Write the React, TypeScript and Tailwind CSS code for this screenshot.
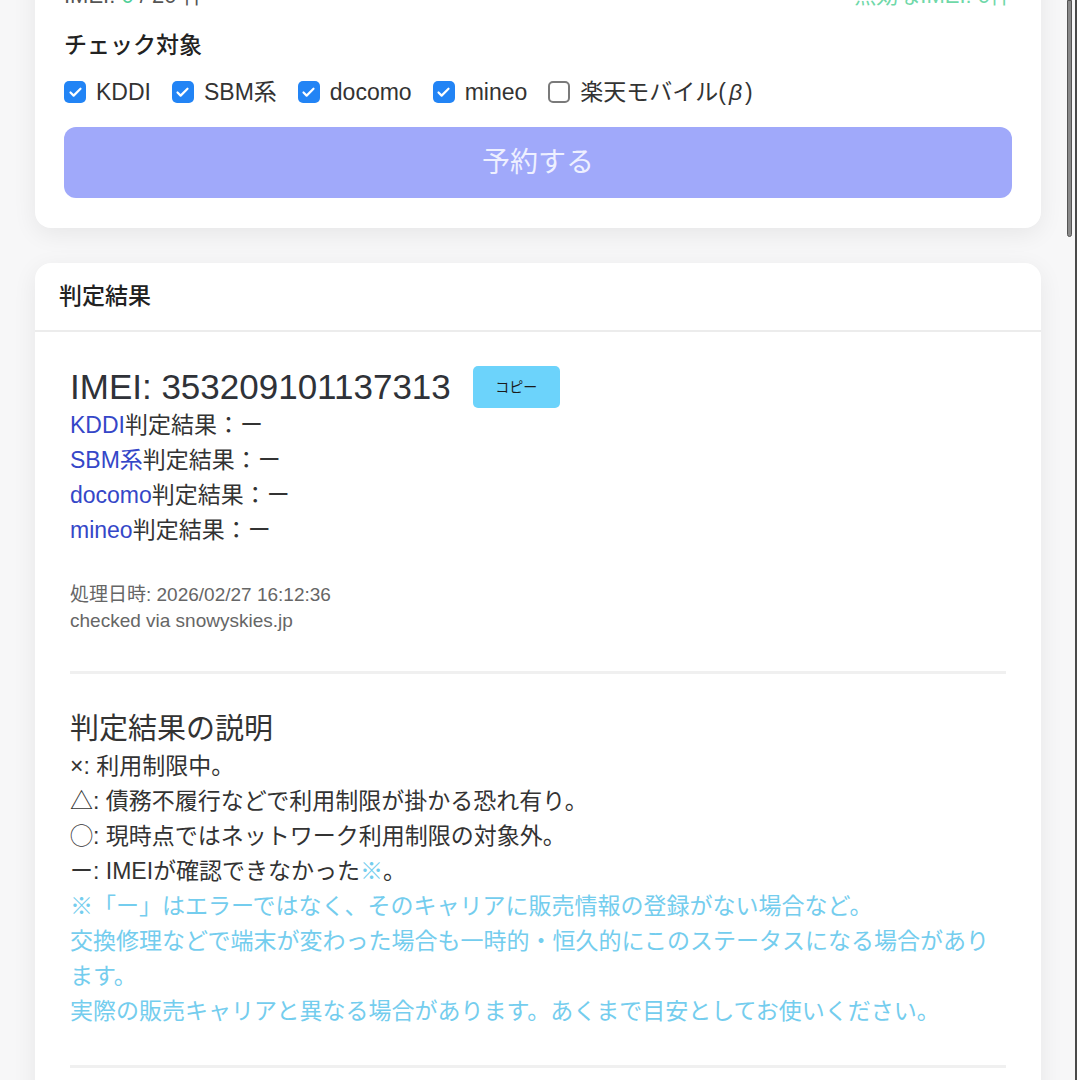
import { Check } from 'lucide-react'

const FONT = { fontFamily: '"Liberation Sans", "Noto Sans CJK JP", sans-serif' }

const CARRIERS = [
  { label: 'KDDI', checked: true },
  { label: 'SBM系', checked: true },
  { label: 'docomo', checked: true },
  { label: 'mineo', checked: true },
  { label: '楽天モバイル', checked: false, beta: true },
]

const RESULTS = ['KDDI', 'SBM系', 'docomo', 'mineo']

function CheckBox({ checked }: { checked: boolean }) {
  if (checked) {
    return (
      <span className="flex h-[22px] w-[22px] items-center justify-center rounded-[5px] bg-[#2284f5]">
        <Check className="h-[15px] w-[15px] text-white" strokeWidth={3.5} />
      </span>
    )
  }
  return <span className="h-[22px] w-[22px] rounded-[5px] border-2 border-[#7a7a7a] bg-white" />
}

export default function App() {
  return (
    <div className="relative h-[1080px] w-full overflow-hidden bg-[#f7f7f8] text-[#333]" style={FONT}>
      <div className="ml-[35px] w-[1006px]">
        {/* Reserve card */}
        <div className="-mt-[50px] rounded-[16px] bg-white px-[29px] pt-[29px] pb-[30px] shadow-[0_6px_24px_rgba(0,0,0,0.07)]">
          <div className="flex items-center justify-between text-[22px] leading-[34px]">
            <span className="text-[#555]">
              IMEI: <span className="text-[#4fcf98]">0</span> / 20 件
            </span>
            <span className="text-[#6fd8a8]">無効なIMEI: 0件</span>
          </div>

          <div className="mt-[16px] text-[23px] leading-[32px] font-medium text-[#222]">チェック対象</div>

          <div className="mt-[14px] flex items-center text-[23px] leading-[34px] text-[#333]">
            {CARRIERS.map((c) => (
              <label key={c.label} className="mr-[21px] flex items-center gap-[10px]">
                <CheckBox checked={c.checked} />
                <span>
                  {c.label}
                  {c.beta && (
                    <>
                      (<i className="px-[3px]">β</i>)
                    </>
                  )}
                </span>
              </label>
            ))}
          </div>

          <button className="mt-[18px] flex h-[71px] w-full items-center justify-center rounded-[12px] bg-[#a0a9fa] text-[28px] text-[#eef0ff]">
            予約する
          </button>
        </div>

        {/* Result card */}
        <div className="mt-[35px] rounded-[16px] bg-white shadow-[0_6px_24px_rgba(0,0,0,0.07)]">
          <div className="flex h-[69px] items-center border-b-2 border-[#ececec] px-[24px] text-[23px] font-medium text-[#222]">
            判定結果
          </div>

          <div className="px-[35px] pt-[34px] pb-[40px]">
            <div className="flex items-center">
              <h2 className="text-[35px] leading-[42px] text-[#2f3238]">IMEI: 353209101137313</h2>
              <button className="ml-[22px] flex h-[42px] w-[87px] items-center justify-center rounded-[5px] bg-[#6cd3fb] text-[14px] text-[#1b1b1b]">
                コピー
              </button>
            </div>

            <div className="text-[23px] leading-[35px]">
              {RESULTS.map((r) => (
                <div key={r}>
                  <span className="text-[#3547c8]">{r}</span>判定結果：ー
                </div>
              ))}
            </div>

            <div className="mt-[34px] text-[19px] leading-[26px] text-[#666]">
              <div>処理日時: 2026/02/27 16:12:36</div>
              <div>checked via snowyskies.jp</div>
            </div>

            <hr className="mt-[37px] border-t-[3px] border-[#f0f0f0]" />

            <h3 className="mt-[35px] text-[29px] leading-[40px] text-[#333]">判定結果の説明</h3>
            <div className="text-[23px] leading-[35px]">
              <div>×: 利用制限中。</div>
              <div>△: 債務不履行などで利用制限が掛かる恐れ有り。</div>
              <div>◯: 現時点ではネットワーク利用制限の対象外。</div>
              <div>
                ー: IMEIが確認できなかった<span className="text-[#74cdee]">※</span>。
              </div>
              <div className="text-[#74cdee]">
                <div>※「ー」はエラーではなく、そのキャリアに販売情報の登録がない場合など。</div>
                <div>交換修理などで端末が変わった場合も一時的・恒久的にこのステータスになる場合があります。</div>
                <div>実際の販売キャリアと異なる場合があります。あくまで目安としてお使いください。</div>
              </div>
            </div>

            <hr className="mt-[36px] border-t-[3px] border-[#f0f0f0]" />
            <div className="h-[60px]" />
          </div>
        </div>
      </div>

      {/* scrollbar overlay */}
      <div className="absolute top-0 right-0 h-full w-[2px] bg-[#4a4a4a]" />
      <div className="absolute top-0 right-[5px] h-[237px] w-[5px] rounded-b-full border border-[#555] bg-[#8a8a8a]" />
    </div>
  )
}
